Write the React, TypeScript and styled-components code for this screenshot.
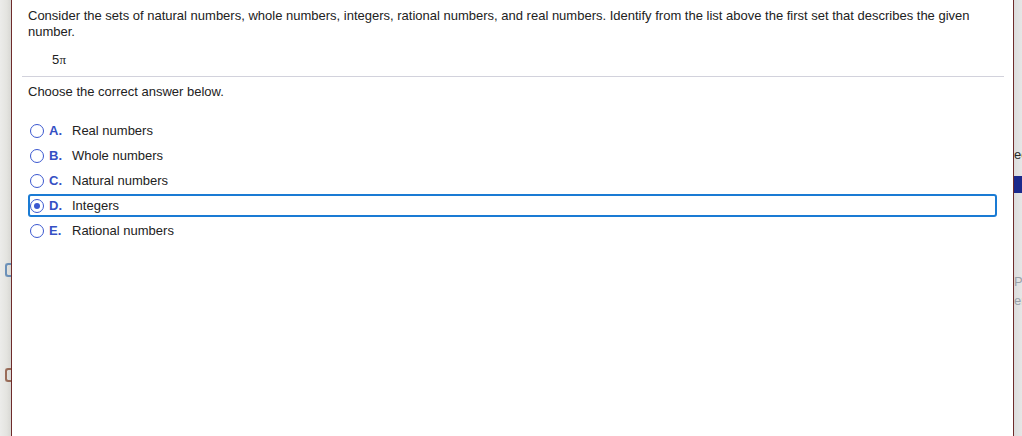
import React from 'react';
import styled, { createGlobalStyle } from 'styled-components';

const GlobalStyle = createGlobalStyle`
    html, body {
        margin: 0;
        padding: 0;
        background: #e6e6e4;
    }
    body {
        font-family: "Liberation Sans", Arial, sans-serif;
    }
`;

const Page = styled.div`
    display: flex;
    width: 1022px;
    height: 436px;
    overflow: hidden;
`;

const Gutter = styled.div<{ $width: number; $side: 'left' | 'right' }>`
    position: relative;
    width: ${(props) => props.$width}px;
    flex-shrink: 0;
    background: ${(props) =>
        props.$side === 'left'
            ? 'linear-gradient(90deg, #ececea 0%, #e4e4e0 60%, #d8d8d4 100%)'
            : 'linear-gradient(90deg, #dcdcdc 0%, #e6e6e6 100%)'};
    overflow: hidden;
`;

const Peek = styled.span<{ $top: number; $color: string }>`
    position: absolute;
    top: ${(props) => props.$top}px;
    left: 0;
    font-size: 13px;
    color: ${(props) => props.$color};
    white-space: nowrap;
`;

const PeekBar = styled.div`
    position: absolute;
    top: 176px;
    left: 0;
    width: 100%;
    height: 17px;
    background: #1b2a8c;
`;

const PeekIcon = styled.div<{ $top: number; $color: string }>`
    position: absolute;
    top: ${(props) => props.$top}px;
    left: 5px;
    width: 7px;
    height: 10px;
    border-radius: 3px;
    border: 2px solid ${(props) => props.$color};
    border-right: none;
    opacity: 0.7;
`;

const Panel = styled.div`
    flex: 1;
    background: #ffffff;
    border-left: 1px solid #6e2b2b;
    border-right: 1px solid #6e2b2b;
    padding: 8px 9px 0 10px;
    color: #222222;
    font-size: 13px;
`;

const Question = styled.p`
    margin: 0 0 0 6px;
    line-height: 16px;
    font-size: 13px;
`;

const Expression = styled.div`
    margin: 12px 0 0 30px;
    font-size: 13px;
    line-height: 16px;
    font-family: "Liberation Serif", "Times New Roman", serif;
    letter-spacing: 0.2px;
`;

const Expr5 = styled.span`
    font-family: "Liberation Sans", Arial, sans-serif;
`;

const Divider = styled.hr`
    margin: 8px 0 0 0;
    border: none;
    border-top: 1px solid #d2d2dc;
`;

const Prompt = styled.p`
    margin: 7px 0 0 6px;
    line-height: 16px;
    font-size: 13px;
`;

const OptionList = styled.div`
    display: flex;
    flex-direction: column;
    gap: 2px;
    margin: 19px 7px 0 6px;
`;

const OptionRow = styled.div<{ $selected?: boolean }>`
    display: flex;
    align-items: center;
    height: 19px;
    padding: 0;
    border: 2px solid ${(props) => (props.$selected ? '#1a7bd4' : 'transparent')};
    border-radius: 3px;
    font-size: 13px;
`;

const Radio = styled.span<{ $checked?: boolean }>`
    position: relative;
    width: 12px;
    height: 12px;
    margin-left: 0;
    border: 1.3px solid #3b58d0;
    border-radius: 50%;
    flex-shrink: 0;

    &::after {
        content: '';
        display: ${(props) => (props.$checked ? 'block' : 'none')};
        position: absolute;
        top: 3px;
        left: 3px;
        width: 6px;
        height: 6px;
        border-radius: 50%;
        background: #3b58d0;
    }
`;

const Letter = styled.span`
    width: 23px;
    margin-left: 5px;
    color: #3550c4;
    font-weight: bold;
    letter-spacing: 0.2px;
`;

const Label = styled.span`
    color: #222222;
`;

const options = [
    { letter: 'A.', text: 'Real numbers' },
    { letter: 'B.', text: 'Whole numbers' },
    { letter: 'C.', text: 'Natural numbers' },
    { letter: 'D.', text: 'Integers' },
    { letter: 'E.', text: 'Rational numbers' },
];

export default function App() {
    const selected = 'D.';

    return (
        <>
            <GlobalStyle />
            <Page>
                <Gutter $width={11} $side="left">
                    <PeekIcon $top={263} $color="#3a6ea8" />
                    <PeekIcon $top={368} $color="#7a3a20" />
                </Gutter>
                <Panel>
                    <Question>
                        Consider the sets of natural numbers, whole numbers, integers, rational numbers, and real
                        numbers. Identify from the list above the first set that describes the given number.
                    </Question>
                    <Expression>
                        <Expr5>5</Expr5>π
                    </Expression>
                    <Divider />
                    <Prompt>Choose the correct answer below.</Prompt>
                    <OptionList>
                        {options.map((option) => {
                            const isSelected = option.letter === selected;
                            return (
                                <OptionRow key={option.letter} $selected={isSelected}>
                                    <Radio $checked={isSelected} />
                                    <Letter>{option.letter}</Letter>
                                    <Label>{option.text}</Label>
                                </OptionRow>
                            );
                        })}
                    </OptionList>
                </Panel>
                <Gutter $width={8} $side="right">
                    <Peek $top={147} $color="#2a2a2a">
                        ec
                    </Peek>
                    <PeekBar />
                    <Peek $top={274} $color="#9aa0a8">
                        P
                    </Peek>
                    <Peek $top={293} $color="#9aa0a8">
                        er
                    </Peek>
                </Gutter>
            </Page>
        </>
    );
}
